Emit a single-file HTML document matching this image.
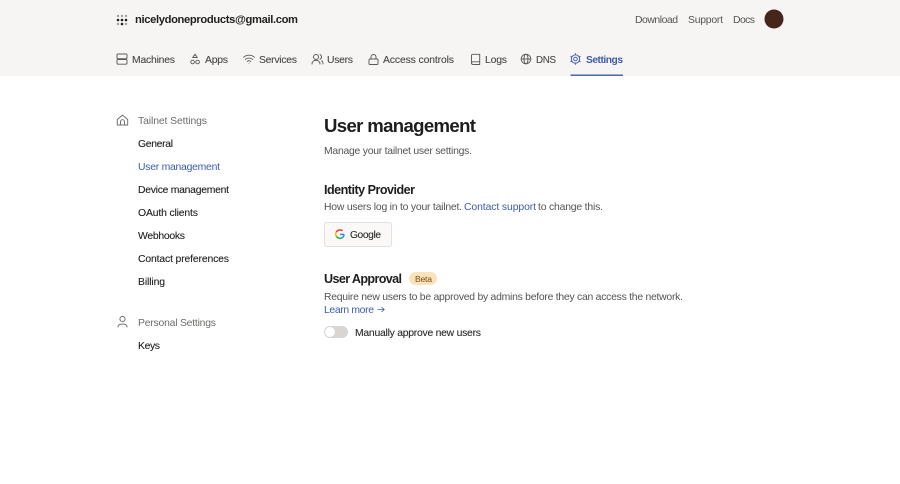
<!DOCTYPE html>
<html><head><meta charset="utf-8"><style>
html,body{margin:0;padding:0;background:#fff;width:900px;height:484px;overflow:hidden}
svg{display:block}
text{font-family:"Liberation Sans",sans-serif;font-size:10.4px;fill:#3a3a3a}
.n{fill:#4a4a49;stroke:#4a4a49;stroke-width:.12}
.b{fill:#3f5cab}
.d{fill:#1f1e1e;stroke:#1f1e1e;stroke-width:.1}
.m{fill:#6f6d6b}
.g{fill:#555352}
.i{fill:none;stroke:#5a5a58;stroke-width:.95;stroke-linecap:round;stroke-linejoin:round}
.h{font-weight:700;stroke:none}
</style></head><body>
<svg width="900" height="484" viewBox="0 0 900 484" xmlns="http://www.w3.org/2000/svg">
<rect width="900" height="76" fill="#f7f5f4"/>
<g fill="#1f1e1e"><circle cx="118" cy="16" r="1.2" opacity=".4"/><circle cx="122" cy="16" r="1.2" opacity=".4"/><circle cx="126" cy="16" r="1.2" opacity=".4"/><circle cx="118" cy="20" r="1.3"/><circle cx="122" cy="20" r="1.3"/><circle cx="126" cy="20" r="1.3"/><circle cx="118" cy="24" r="1.2" opacity=".4"/><circle cx="122" cy="24" r="1.3"/><circle cx="126" cy="24" r="1.2" opacity=".4"/></g>
<text x="135" y="23" textLength="163" class="d h" style="font-size:11.2px">nicelydoneproducts@gmail.com</text>
<text x="635" y="23" textLength="43" class="g">Download</text>
<text x="688" y="23" textLength="35" class="g">Support</text>
<text x="733" y="23" textLength="22" class="g">Docs</text>
<circle cx="774" cy="19" r="9.5" fill="#46251b"/>

<g class="i"><rect x="117" y="54" width="10" height="4.7" rx="1.2"/><rect x="117" y="59.5" width="10" height="4.7" rx="1.2"/></g>
<text x="132" y="63" textLength="43" class="n">Machines</text>
<g class="i"><path d="M195 54.2l2.3 3.3h-4.6z"/><circle cx="192.6" cy="62" r="1.8"/><circle cx="197.6" cy="62" r="1.8"/></g>
<text x="205" y="63" textLength="23" class="n">Apps</text>
<g class="i" style="stroke-width:.9"><path d="M243.5 57.3c3.2-2.8 7.8-2.8 11 0M245.3 59.4c2.2-1.8 5.2-1.8 7.4 0M247.2 61.4c1.1-.8 2.5-.8 3.6 0M249 63.2h0"/></g>
<text x="259" y="63" textLength="38" class="n">Services</text>
<g class="i"><circle cx="316" cy="57" r="2.5"/><path d="M312 64c0-5 8-5 8 0M320 54.6c2 .5 2 4 0 4.6M321.6 60.8c1 .5 1.4 1.7 1.4 3.2"/></g>
<text x="327" y="63" textLength="26" class="n">Users</text>
<g class="i"><rect x="369" y="59" width="9" height="5.5" rx="1"/><path d="M371 59v-2a2.5 2.5 0 0 1 5 0v2"/></g>
<text x="383" y="63" textLength="71" class="n">Access controls</text>
<g class="i"><path d="M471.5 63V55.5a1.2 1.2 0 0 1 1.2-1.2h7v10.2h-6.8a1.5 1.5 0 0 1-1.4-1.5a1.5 1.5 0 0 1 1.4-1.2h6.8"/></g>
<text x="485" y="63" textLength="22" class="n">Logs</text>
<g class="i"><circle cx="526" cy="59" r="4.8"/><ellipse cx="526" cy="59" rx="2" ry="4.8"/><path d="M521.2 59h9.6"/></g>
<text x="536" y="63" textLength="20" class="n" style="font-size:9.8px">DNS</text>
<g class="i" style="stroke:#3f5cab"><circle cx="575.5" cy="59" r="1.8"/><circle cx="575.5" cy="59" r="4.2"/><path d="M575.5 53.6v1.2M575.5 63.2v1.2M570.8 56.3l1 .6M579.2 61.1l1 .6M570.8 61.7l1-.6M579.2 56.9l1-.6"/></g>
<text x="586" y="63" textLength="37" class="b h" style="font-size:10.2px">Settings</text>
<rect x="570.5" y="74.5" width="52.5" height="1.5" fill="#4a66ad"/>

<g class="i" style="stroke:#6f6d6b"><path d="M117.3 119.5l5.2-4.4 5.2 4.4v5.5h-10.4z"/><path d="M120.5 125v-3.3a2 2 0 0 1 4 0v3.3"/></g>
<text x="138" y="124" textLength="69" class="m">Tailnet Settings</text>
<text x="138" y="147" textLength="35" class="d">General</text>
<text x="138" y="170" textLength="82" class="b">User management</text>
<text x="138" y="193" textLength="91" class="d">Device management</text>
<text x="138" y="216" textLength="60" class="d">OAuth clients</text>
<text x="138" y="239" textLength="47" class="d">Webhooks</text>
<text x="138" y="262" textLength="91" class="d">Contact preferences</text>
<text x="138" y="285" textLength="27" class="d">Billing</text>
<g class="i" style="stroke:#6f6d6b"><circle cx="122.5" cy="319" r="2.6"/><path d="M118 327c0-1 .3-3 4.5-3s4.5 2 4.5 3"/></g>
<text x="138" y="326" textLength="78" class="m">Personal Settings</text>
<text x="138" y="349" textLength="22" class="d">Keys</text>

<text x="324" y="132" textLength="152" class="d h" style="font-size:18.6px">User management</text>
<text x="324" y="154" textLength="148" class="g">Manage your tailnet user settings.</text>
<text x="324" y="194" textLength="91" class="d h" style="font-size:12.6px">Identity Provider</text>
<text x="324" y="210" textLength="138" class="g">How users log in to your tailnet.</text>
<text x="464" y="210" textLength="72" class="b">Contact support</text>
<text x="538" y="210" textLength="65" class="g">to change this.</text>

<rect x="324.5" y="222.5" width="67" height="24" rx="2" fill="#faf9f8" stroke="#e4e1df"/>
<g fill="none" stroke-width="1.6"><path d="M344 234.4h-4" stroke="#4285f4"/><path d="M344 234.4a4.2 4.2 0 0 1-1.5 3.2" stroke="#4285f4"/><path d="M342.5 237.6a4.5 4.5 0 0 1-6.2-1.3" stroke="#34a853"/><path d="M336.3 236.3a4.5 4.5 0 0 1 0-4.3" stroke="#fbbc05"/><path d="M336.3 232a4.5 4.5 0 0 1 6.3-1.3" stroke="#ea4335"/></g>
<text x="350" y="238" textLength="31" class="d" style="fill:#2c2b2b;stroke:#2c2b2b;font-size:10.2px">Google</text>

<text x="324" y="283" textLength="78" class="d h" style="font-size:12.6px">User Approval</text>
<rect x="409" y="272" width="28" height="13" rx="6.5" fill="#fae3bb"/>
<text x="415" y="282" textLength="17" style="font-size:8.6px;fill:#7a4a12">Beta</text>
<text x="324" y="300" textLength="359" class="g">Require new users to be approved by admins before they can access the network.</text>
<text x="324" y="313" textLength="50" class="b">Learn more</text>
<path d="M377.5 309.5h6.5M381.5 307l2.7 2.5-2.7 2.5" fill="none" stroke="#3f5cab" stroke-width=".8"/>
<rect x="324" y="326" width="24" height="12" rx="6" fill="#d8d5d2"/>
<circle cx="330" cy="332" r="5" fill="#fff"/>
<text x="355" y="336" textLength="126" class="d" style="fill:#2c2b2b;stroke:#2c2b2b">Manually approve new users</text>
</svg>
</body></html>
